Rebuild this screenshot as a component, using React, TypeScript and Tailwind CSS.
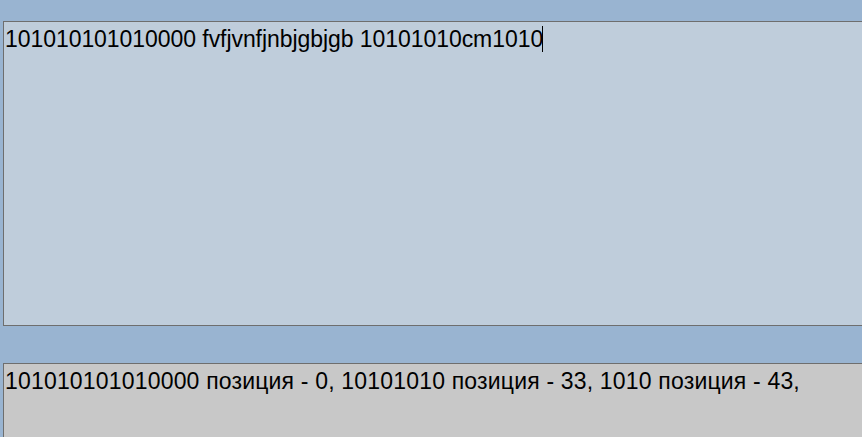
export default function App() {
  return (
    <div className="w-[862px] h-[437px] overflow-hidden bg-[#99b4d1] pl-[3px] pt-[21px] text-black" style={{ fontFamily: '"Liberation Sans", Arial, sans-serif' }}>
      <div className="w-[870px] h-[305px] bg-[#bfcddb] border border-[#6e6e6e] pl-[1px] pt-[4px] text-[23px] leading-[26px] tracking-[-0.06px] whitespace-nowrap">
        101010101010000 fvfjvnfjnbjgbjgb 10101010cm1010
        <span className="inline-block w-px h-[26px] bg-black align-top -ml-[1px]"></span>
      </div>
      <div className="mt-[37px] w-[870px] h-[120px] bg-[#c8c8c8] border border-[#6e6e6e] pl-[1px] pt-[4px] text-[23px] leading-[26px] tracking-[0.18px] whitespace-nowrap">
        101010101010000 позиция - 0, 10101010 позиция - 33, 1010 позиция - 43,
      </div>
    </div>
  );
}
